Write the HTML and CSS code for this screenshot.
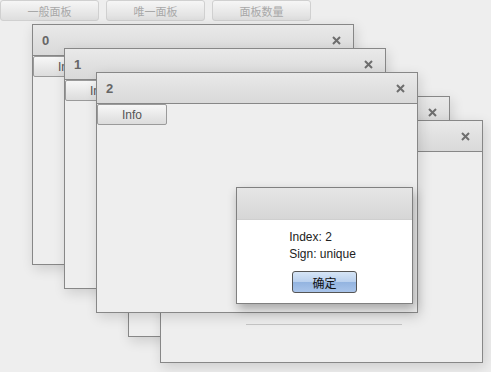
FILE: index.html
```html
<!DOCTYPE html>
<html lang="en">
<head>
<meta charset="UTF-8">
<meta name="viewport" content="width=device-width, initial-scale=1.0">
<title>Panels</title>
<link rel="stylesheet" href="styles.css">
</head>
<body>
<div class="toolbar">
  <button class="tool-btn">一般面板</button>
  <button class="tool-btn">唯一面板</button>
  <button class="tool-btn">面板数量</button>
</div>

<div class="desktop">
  <!-- panel windows, each one offset from the last -->
  <div class="win win-0">
    <div class="win-head">
      <span class="win-title">0</span>
      <svg class="win-close" width="9" height="9" viewBox="0 0 9 9"><path d="M1 1L8 8M8 1L1 8"/></svg>
    </div>
    <div class="win-body">
      <button class="info-btn">Info</button>
    </div>
  </div>

  <div class="win win-1">
    <div class="win-head">
      <span class="win-title">1</span>
      <svg class="win-close" width="9" height="9" viewBox="0 0 9 9"><path d="M1 1L8 8M8 1L1 8"/></svg>
    </div>
    <div class="win-body">
      <button class="info-btn">Info</button>
    </div>
  </div>

  <div class="win win-3">
    <div class="win-head">
      <span class="win-title"></span>
      <svg class="win-close" width="9" height="9" viewBox="0 0 9 9"><path d="M1 1L8 8M8 1L1 8"/></svg>
    </div>
    <div class="win-body"></div>
  </div>

  <div class="win win-4">
    <div class="win-head">
      <span class="win-title"></span>
      <svg class="win-close" width="9" height="9" viewBox="0 0 9 9"><path d="M1 1L8 8M8 1L1 8"/></svg>
    </div>
    <div class="win-body">
      <div class="win-rule"></div>
    </div>
  </div>

  <div class="win win-2">
    <div class="win-head">
      <span class="win-title">2</span>
      <svg class="win-close" width="9" height="9" viewBox="0 0 9 9"><path d="M1 1L8 8M8 1L1 8"/></svg>
    </div>
    <div class="win-body">
      <button class="info-btn">Info</button>
    </div>

    <!-- info dialog for panel 2 -->
    <div class="dialog">
      <div class="dialog-head"></div>
      <div class="dialog-body">
        <div class="dialog-text">
          <div>Index: 2</div>
          <div>Sign: unique</div>
        </div>
        <button class="ok-btn">确定</button>
      </div>
    </div>
  </div>
</div>
</body>
</html>
```

FILE: styles.css
```css
body {
  margin: 0;
  background-color: #eeeeee;
  font-family: "Liberation Sans", "Noto Sans CJK SC", sans-serif;
  font-size: 12px;
  width: 491px;
  height: 372px;
  overflow: hidden;
}

.toolbar {
  display: flex;
  gap: 7px;
  height: 21px;
}

.tool-btn {
  width: 99px;
  height: 21px;
  padding: 0;
  border: 1px solid #d0d0d0;
  border-radius: 3px;
  background: linear-gradient(#f6f6f6, #dedede);
  color: #a8a8a8;
  font-family: "Noto Sans CJK SC", sans-serif;
  font-size: 11px;
}

.desktop {
  position: relative;
  height: 351px;
}

/* windows sit on a free canvas, so they are placed by offset */
.win {
  position: absolute;
  box-sizing: border-box;
  width: 322px;
  height: 241px;
  border: 1px solid #878787;
  background-color: #eeeeee;
  box-shadow: 2px 4px 12px rgba(0, 0, 0, 0.14);
  display: flex;
  flex-direction: column;
}

.win-0 { left: 32px; top: 3px; z-index: 1; }
.win-1 { left: 64px; top: 27px; z-index: 2; }
.win-3 { left: 128px; top: 75px; z-index: 3; }
.win-4 { left: 160px; top: 99px; z-index: 4; height: 243px; width: 323px; }
.win-2 { left: 96px; top: 51px; z-index: 5; }

.win-head {
  height: 30px;
  border-bottom: 1px solid #878787;
  background: linear-gradient(#e9e9e9, #d9d9d9);
  display: flex;
  align-items: center;
  justify-content: space-between;
  padding: 0 12px 0 9px;
}

.win-title {
  font-size: 13px;
  font-weight: bold;
  color: #666;
}

.win-close {
  stroke: #6e6e6e;
  stroke-width: 2;
}

.win-body {
  flex: 1;
}

.info-btn {
  width: 70px;
  height: 21px;
  padding: 0;
  border: 1px solid #9a9a9a;
  border-radius: 2px;
  background: linear-gradient(#f7f7f7, #dcdcdc);
  color: #555;
  font-family: "Liberation Sans", sans-serif;
  font-size: 12px;
}

.win-rule {
  margin: 172px 0 0 85px;
  width: 156px;
  height: 1px;
  background-color: #c6c6c6;
}

.dialog {
  position: absolute;
  left: 139px;
  top: 114px;
  box-sizing: border-box;
  width: 177px;
  height: 117px;
  border: 1px solid #808080;
  background-color: #fff;
  box-shadow: 2px 5px 10px rgba(0, 0, 0, 0.3);
  display: flex;
  flex-direction: column;
}

.dialog-head {
  height: 31px;
  background: linear-gradient(#e6e6e6, #d6d6d6);
  border-bottom: 1px solid #cfcfcf;
}

.dialog-body {
  display: flex;
  flex-direction: column;
  align-items: center;
  padding-top: 9px;
}

.dialog-text {
  line-height: 17px;
  color: #222;
  padding-right: 4px;
}

.ok-btn {
  margin-top: 8px;
  width: 65px;
  height: 22px;
  padding: 0;
  border: 1px solid #555;
  border-radius: 3px;
  background: linear-gradient(#d6e5f6 0%, #b9d0ee 50%, #93b4e0 51%, #a9c4ea 100%);
  color: #111;
  font-family: "Noto Sans CJK SC", sans-serif;
  font-size: 12px;
}
```
